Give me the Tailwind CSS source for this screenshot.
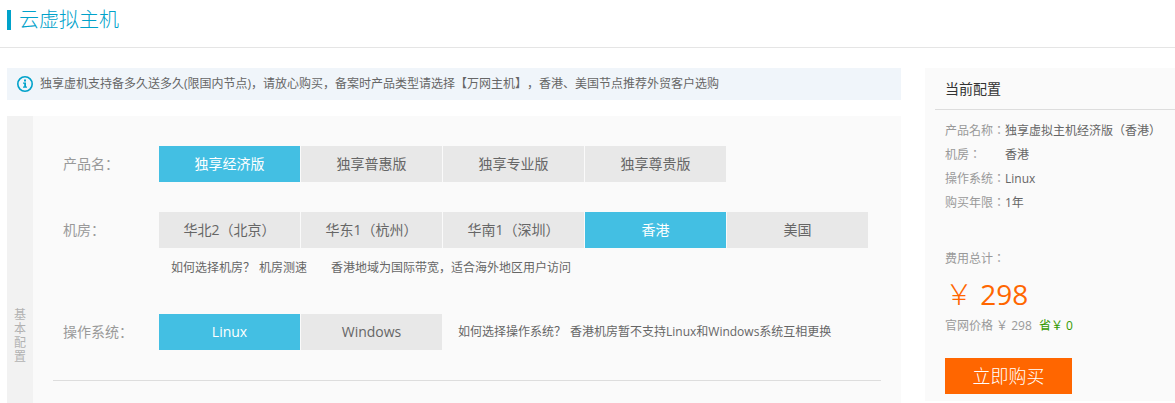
<!DOCTYPE html>
<html lang="zh-CN">
<head>
    <meta charset="UTF-8">
    <meta name="viewport" content="width=device-width, initial-scale=1.0">
    <script src="https://cdn.jsdelivr.net/npm/@tailwindcss/browser@4"></script>
    <title>云虚拟主机</title>
</head>

<body class="bg-white text-xs text-[#666] font-['Open_Sans','Noto_Sans_CJK_SC',sans-serif] [text-spacing-trim:space-all]">

    <header class="flex items-center h-12 pl-[7px] pb-2 border-b border-[#e5e5e5]">
        <span class="w-1 h-5 bg-[#00a2ca]"></span>
        <h1 class="ml-2 text-xl leading-6 font-light text-[#00a2ca]">云虚拟主机</h1>
    </header>

    <div class="flex items-start gap-6 pt-5 pl-[7px]">

        <main class="flex-1 min-w-0">
            <p class="flex items-center gap-[6px] h-8 pl-[9px] bg-[#f0f5fa]">
                <svg class="size-[18px] shrink-0" viewBox="0 0 18 18" fill="none" aria-hidden="true">
                    <circle cx="9" cy="9" r="7.2" stroke="#00a2ca" stroke-width="1.6"/>
                    <path d="M8 4.5h2v2H8zM7 7.5h3v4h1v1.3H7v-1.3h1.2V8.8H7z" fill="#00a2ca"/>
                </svg>
                <span>独享虚机支持备多久送多久(限国内节点)，请放心购买，备案时产品类型请选择【万网主机】，香港、美国节点推荐外贸客户选购</span>
            </p>

            <section class="flex mt-4 bg-[#fafafa]">
                <h2 class="w-[26px] shrink-0 pt-48 px-[7px] leading-[14px] text-[#b2b2b2] bg-[#f2f2f2]">基本配置</h2>

                <div class="flex-1 min-w-0 px-5 pb-[22px]">
                    <div class="pt-[30px] pb-[30px] pl-[10px] border-b border-[#ddd]">

                        <!-- product -->
                        <div class="flex items-center" role="group" aria-labelledby="product">
                            <span id="product" class="w-24 shrink-0 text-sm text-[#999]">产品名：</span>
                            <div class="flex gap-px text-sm">
                                <button type="button" aria-pressed="true" class="w-[141px] h-9 cursor-pointer bg-[#43bfe3] text-white">独享经济版</button>
                                <button type="button" class="w-[141px] h-9 cursor-pointer bg-[#e8e8e8]">独享普惠版</button>
                                <button type="button" class="w-[141px] h-9 cursor-pointer bg-[#e8e8e8]">独享专业版</button>
                                <button type="button" class="w-[141px] h-9 cursor-pointer bg-[#e8e8e8]">独享尊贵版</button>
                            </div>
                        </div>

                        <!-- region -->
                        <div class="flex items-center mt-[30px]" role="group" aria-labelledby="region">
                            <span id="region" class="w-24 shrink-0 text-sm text-[#999]">机房：</span>
                            <div class="flex gap-px text-sm">
                                <button type="button" class="w-[141px] h-9 cursor-pointer bg-[#e8e8e8]">华北2（北京）</button>
                                <button type="button" class="w-[141px] h-9 cursor-pointer bg-[#e8e8e8]">华东1（杭州）</button>
                                <button type="button" class="w-[141px] h-9 cursor-pointer bg-[#e8e8e8]">华南1（深圳）</button>
                                <button type="button" aria-pressed="true" class="w-[141px] h-9 cursor-pointer bg-[#43bfe3] text-white">香港</button>
                                <button type="button" class="w-[141px] h-9 cursor-pointer bg-[#e8e8e8]">美国</button>
                            </div>
                        </div>
                        <p class="flex mt-[10px] ml-[108px] leading-5">
                            <a href="#" class="mr-1">如何选择机房？</a>
                            <a href="#" class="mr-6">机房测速</a>
                            <span>香港地域为国际带宽，适合海外地区用户访问</span>
                        </p>

                        <!-- operating system -->
                        <div class="flex items-center mt-9" role="group" aria-labelledby="os">
                            <span id="os" class="w-24 shrink-0 text-sm text-[#999]">操作系统：</span>
                            <div class="flex gap-px text-sm">
                                <button type="button" aria-pressed="true" class="w-[141px] h-9 cursor-pointer bg-[#43bfe3] text-white">Linux</button>
                                <button type="button" class="w-[141px] h-9 cursor-pointer bg-[#e8e8e8]">Windows</button>
                            </div>
                            <p class="ml-4"><a href="#" class="mr-1">如何选择操作系统？</a>香港机房暂不支持Linux和Windows系统互相更换</p>
                        </div>
                    </div>
                </div>
            </section>
        </main>

        <aside class="w-[250px] shrink-0 pl-[10px] pb-[7px] bg-[#fafafa]">
            <h2 class="flex items-center h-[42px] pl-[10px] text-sm text-[#333] border-b border-[#ddd]">当前配置</h2>
            <div class="pl-[10px] pt-[9px]">
                <!-- locl off keeps the colon centred in its cell -->
                <dl class="grid grid-cols-[60px_1fr] leading-6 font-['Open_Sans','Noto_Sans_CJK_TC',sans-serif] [font-feature-settings:'locl'_0]">
                    <dt class="text-[#999]">产品名称：</dt>
                    <dd class="whitespace-nowrap">独享虚拟主机经济版（香港）</dd>
                    <dt class="text-[#999]">机房：</dt>
                    <dd>香港</dd>
                    <dt class="text-[#999]">操作系统：</dt>
                    <dd>Linux</dd>
                    <dt class="text-[#999]">购买年限：</dt>
                    <dd>1年</dd>
                </dl>
                <p class="mt-8 leading-6 text-[#999] font-['Open_Sans','Noto_Sans_CJK_TC',sans-serif] [font-feature-settings:'locl'_0]">费用总计：</p>
                <p class="text-[28px] leading-[46px] text-[#f60]"><span class="font-light">￥</span> 298</p>
                <p class="pt-px leading-4 text-[#999]">官网价格 ￥ 298 <span class="ml-1 text-[#390]">省￥ 0</span></p>
                <button type="button" class="block w-[127px] h-9 mt-6 text-lg leading-6 font-light cursor-pointer bg-[#f60] text-white">立即购买</button>
            </div>
        </aside>

    </div>

</body>
</html>
